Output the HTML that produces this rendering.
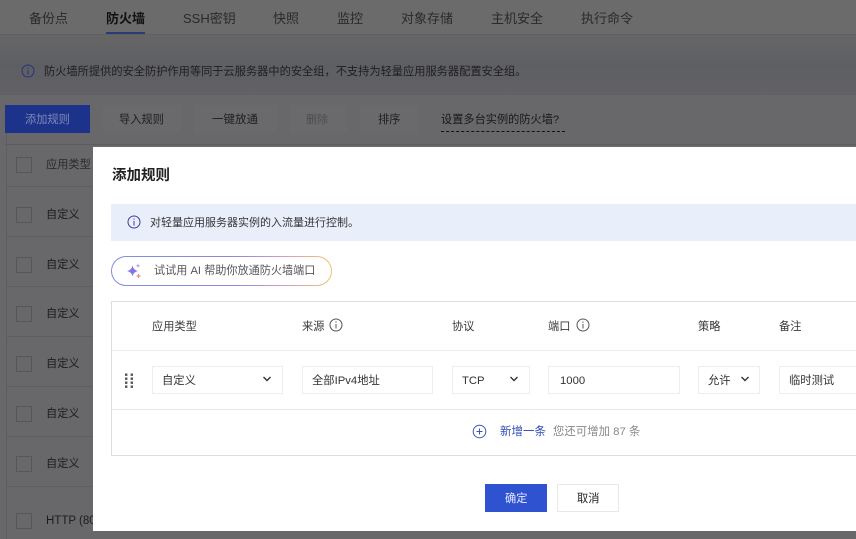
<!DOCTYPE html>
<html><head><meta charset="utf-8">
<style>
html,body{margin:0;padding:0;width:856px;height:539px;overflow:hidden;background:#68686a;font-family:"Liberation Sans","Noto Sans CJK SC",sans-serif;}
.a{position:absolute;white-space:nowrap;line-height:16px}
.box{position:absolute;box-sizing:border-box}
.t{font-size:13px;color:#2a2a2c;top:11px}
.b{font-size:12px;color:#1e1e20}
.gb{position:absolute;top:105px;height:28px;background:#6a6a6c;border-radius:1px}
.cb{position:absolute;left:16px;width:16px;height:16px;box-sizing:border-box;border:1px solid #565658}
.rl{position:absolute;left:6px;width:87px;height:1px;background:#5e5e60}
.r{font-size:11.200px;color:#1c1c1e;left:46px}
.h{font-size:11.200px;color:#3a3a3c;top:319px}
.i{position:absolute;top:366px;height:28px;box-sizing:border-box;border:1px solid #eceef1;background:#fff;font-size:11.300px;color:#333;line-height:28px;padding-left:9px;white-space:nowrap}
svg{position:absolute;display:block}
</style></head><body>
<div class="box" style="left:0;top:0;width:856px;height:34px;background:#6b6b6b"></div>
<div class="box" style="left:0;top:34px;width:856px;height:1px;background:#5f5f60"></div>
<div class="box" style="left:0;top:35px;width:856px;height:60px;background:linear-gradient(#666667,#5e5f63 50%,#626265)"></div>

<div class="a t" style="left:29px">备份点</div>
<div class="a t" style="left:106px;color:#111;font-weight:bold">防火墙</div>
<div class="box" style="left:106px;top:32px;width:39px;height:2px;background:#2c3a78"></div>
<div class="a t" style="left:183px">SSH密钥</div>
<div class="a t" style="left:273px">快照</div>
<div class="a t" style="left:337px">监控</div>
<div class="a t" style="left:401px">对象存储</div>
<div class="a t" style="left:491px">主机安全</div>
<div class="a t" style="left:581px">执行命令</div>

<svg style="left:21px;top:64px" width="14" height="14" viewBox="0 0 14 14" fill="none" stroke="#27317a" stroke-width="1"><circle cx="7" cy="7" r="6"/><path d="M7 6v4.500M7 3.500v1.200"/></svg>
<div class="a" style="left:44px;top:64px;font-size:11.230px;color:#1e1e22">防火墙所提供的安全防护作用等同于云服务器中的安全组，不支持为轻量应用服务器配置安全组。</div>

<div class="box" style="left:5px;top:105px;width:85px;height:28px;background:#1d328a"></div>
<div class="a" style="left:25px;top:112px;font-size:11.200px;color:#7f8ab8">添加规则</div>
<div class="gb" style="left:103px;width:78px"></div>
<div class="a b" style="left:119px;top:112px;font-size:11.200px">导入规则</div>
<div class="gb" style="left:194px;width:83px"></div>
<div class="a b" style="left:212px;top:112px;font-size:11.500px">一键放通</div>
<div class="gb" style="left:290px;width:57px"></div>
<div class="a" style="left:306px;top:112px;font-size:11px;color:#4e4e50">删除</div>
<div class="gb" style="left:360px;width:58px"></div>
<div class="a b" style="left:378px;top:112px;font-size:11.200px">排序</div>
<div class="a" style="left:441px;top:112px;font-size:11.200px;color:#18181a">设置多台实例的防火墙?</div>
<div class="box" style="left:441px;top:131px;width:124px;border-top:1px dashed #111"></div>
<div class="box" style="left:5px;top:144px;width:851px;height:1px;background:#5c5c5e"></div>
<div class="box" style="left:6px;top:133px;width:1px;height:406px;background:#5e5e60"></div>

<div class="cb" style="top:157px"></div><div class="a r" style="top:157px;color:#2a2a2c">应用类型</div>
<div class="rl" style="top:186px"></div>
<div class="cb" style="top:207px"></div><div class="a r" style="top:207px">自定义</div>
<div class="rl" style="top:236px"></div>
<div class="cb" style="top:257px"></div><div class="a r" style="top:257px">自定义</div>
<div class="rl" style="top:286px"></div>
<div class="cb" style="top:306px"></div><div class="a r" style="top:306px">自定义</div>
<div class="rl" style="top:336px"></div>
<div class="cb" style="top:356px"></div><div class="a r" style="top:356px">自定义</div>
<div class="rl" style="top:386px"></div>
<div class="cb" style="top:406px"></div><div class="a r" style="top:406px">自定义</div>
<div class="rl" style="top:436px"></div>
<div class="cb" style="top:456px"></div><div class="a r" style="top:456px">自定义</div>
<div class="rl" style="top:486px"></div>
<div class="cb" style="top:513px"></div><div class="a r" style="top:513px;font-size:11.500px">HTTP (80)</div>

<div class="box" style="left:93px;top:147px;width:763px;height:384px;background:#fff"></div>
<div class="a" style="left:112px;top:168px;font-size:14.500px;color:#222;font-weight:bold">添加规则</div>

<div class="box" style="left:111px;top:204px;width:745px;height:37px;background:#e9effa"></div>
<svg style="left:127px;top:215px" width="14" height="14" viewBox="0 0 14 14" fill="none" stroke="#3a3f96" stroke-width="1"><circle cx="7" cy="7" r="6"/><path d="M7 6v4.500M7 3.500v1.200"/></svg>
<div class="a" style="left:150px;top:215px;font-size:11px;color:#333">对轻量应用服务器实例的入流量进行控制。</div>

<div class="box" style="left:111px;top:256px;width:221px;height:30px;border-radius:15px;padding:1px;background:linear-gradient(90deg,#7f8fe0,#8f86dc 55%,#d99fc0 80%,#f2c26d)"><div style="width:100%;height:100%;background:#fff;border-radius:14px"></div></div>
<svg style="left:126px;top:263px" width="16" height="16" viewBox="0 0 16 16"><path d="M6.500 2.500Q7.300 7 12 8Q7.300 9 6.500 13.500Q5.700 9 1 8Q5.700 7 6.500 2.500Z" fill="#8574e6"/><path d="M12 .5l.7 1.600 1.600.7-1.600.7-.7 1.600-.7-1.600-1.600-.7 1.600-.7z" fill="#9fb0ee"/><path d="M12.500 11v4M10.500 13h4" stroke="#ee8a9c" stroke-width="1.200"/></svg>
<div class="a" style="left:154px;top:263px;font-size:11.140px;color:#55555a">试试用 AI 帮助你放通防火墙端口</div>

<div class="box" style="left:111px;top:301px;width:745px;height:155px;border:1px solid #dcdde0;border-right:none"></div>
<div class="box" style="left:112px;top:350px;width:744px;height:1px;background:#ebecef"></div>
<div class="box" style="left:112px;top:409px;width:744px;height:1px;background:#e6e7ea"></div>

<div class="a h" style="left:152px">应用类型</div>
<div class="a h" style="left:302px">来源</div>
<svg style="left:329px;top:318px" width="14" height="14" viewBox="0 0 14 14" fill="none" stroke="#555" stroke-width="1"><circle cx="7" cy="7" r="6"/><path d="M7 6v4.500M7 3.500v1.200"/></svg>
<div class="a h" style="left:452px">协议</div>
<div class="a h" style="left:548px">端口</div>
<svg style="left:576px;top:318px" width="14" height="14" viewBox="0 0 14 14" fill="none" stroke="#555" stroke-width="1"><circle cx="7" cy="7" r="6"/><path d="M7 6v4.500M7 3.500v1.200"/></svg>
<div class="a h" style="left:698px">策略</div>
<div class="a h" style="left:779px">备注</div>

<svg style="left:124px;top:373px" width="11" height="15" viewBox="0 0 11 15" fill="#555"><rect x="1" y="0.500" width="2.400" height="2.400"/><rect x="6.600" y="0.500" width="2.400" height="2.400"/><rect x="1" y="4.500" width="2.400" height="2.400"/><rect x="6.600" y="4.500" width="2.400" height="2.400"/><rect x="1" y="8.500" width="2.400" height="2.400"/><rect x="6.600" y="8.500" width="2.400" height="2.400"/><rect x="1" y="12.500" width="2.400" height="2.400"/><rect x="6.600" y="12.500" width="2.400" height="2.400"/></svg>

<div class="i" style="left:152px;width:131px">自定义</div>
<svg style="left:262px;top:375px" width="10" height="8" viewBox="0 0 10 8" fill="none" stroke="#333" stroke-width="1.400"><path d="M1.500 2L5 5.500 8.500 2"/></svg>
<div class="i" style="left:302px;width:131px">全部IPv4地址</div>
<div class="i" style="left:452px;width:78px">TCP</div>
<svg style="left:509px;top:375px" width="10" height="8" viewBox="0 0 10 8" fill="none" stroke="#333" stroke-width="1.400"><path d="M1.500 2L5 5.500 8.500 2"/></svg>
<div class="i" style="left:548px;width:132px;padding-left:11px">1000</div>
<div class="i" style="left:698px;width:62px">允许</div>
<svg style="left:740px;top:375px" width="10" height="8" viewBox="0 0 10 8" fill="none" stroke="#333" stroke-width="1.400"><path d="M1.500 2L5 5.500 8.500 2"/></svg>
<div class="i" style="left:779px;width:77px;border-right:none">临时测试</div>

<svg style="left:472px;top:424px" width="15" height="15" viewBox="0 0 15 15" fill="none" stroke="#3a55b8" stroke-width="1"><circle cx="7.500" cy="7.500" r="6.300"/><path d="M7.500 4.500v6M4.500 7.500h6"/></svg>
<div class="a" style="left:500px;top:424px;font-size:11.500px;color:#2f4cb4">新增一条</div>
<div class="a" style="left:553px;top:424px;font-size:11.400px;color:#88888c">您还可增加 87 条</div>

<div class="box" style="left:485px;top:484px;width:62px;height:28px;background:#2f52d0"></div>
<div class="a" style="left:505px;top:491px;font-size:11.200px;color:#e8ecfa">确定</div>
<div class="box" style="left:557px;top:484px;width:62px;height:28px;border:1px solid #e8e8ea;background:#fff"></div>
<div class="a" style="left:577px;top:491px;font-size:11.200px;color:#222">取消</div>
</body></html>
